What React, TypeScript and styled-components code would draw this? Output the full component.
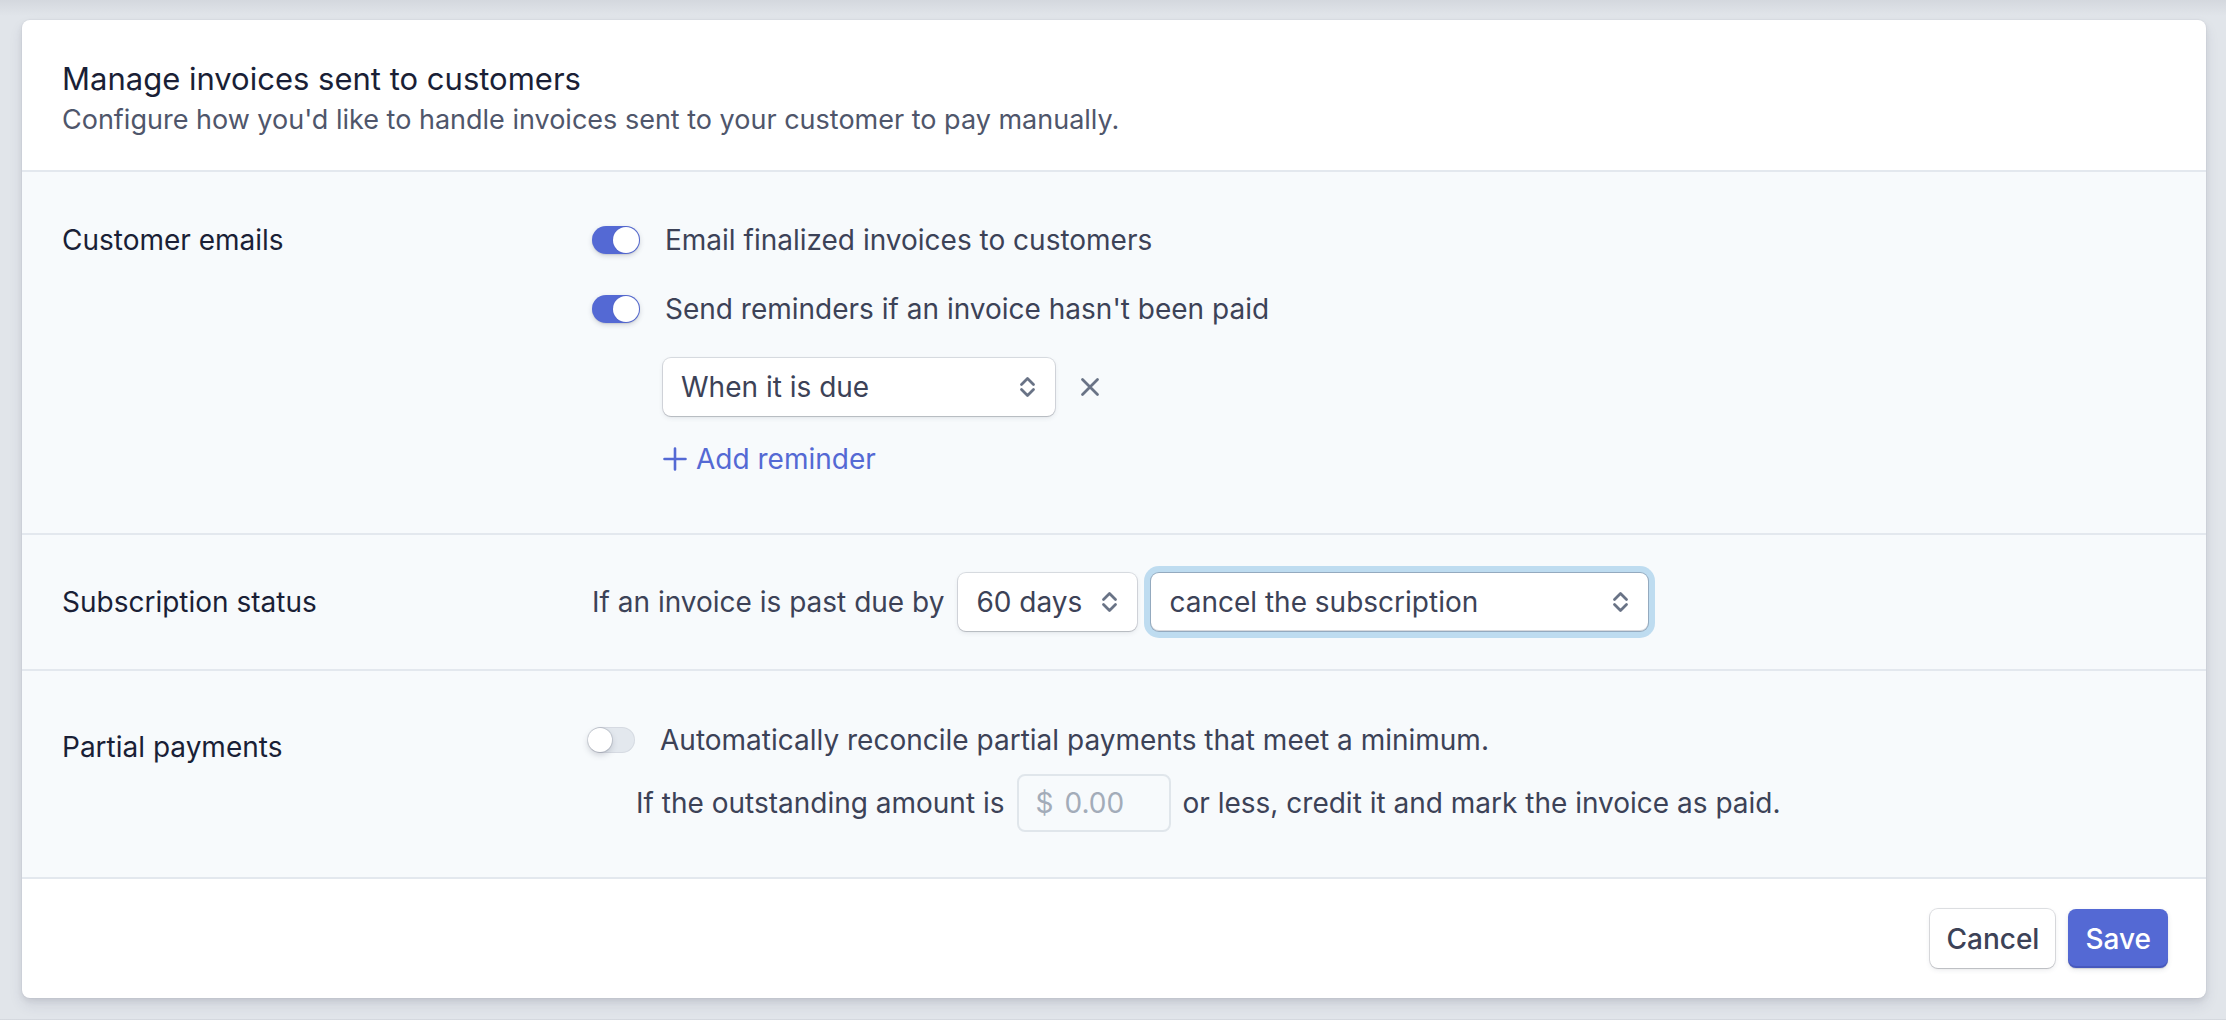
import React from 'react';
import styled, { createGlobalStyle } from 'styled-components';

const GlobalStyle = createGlobalStyle`
  html, body {
    margin: 0;
    padding: 0;
  }

  body {
    background: linear-gradient(180deg, #d4d8de 0px, #e1e5ea 16px, #e1e5ea 100%);
    font-family: Inter, "Noto Sans", "Liberation Sans", sans-serif;
    color: #3c4257;
    -webkit-font-smoothing: antialiased;
  }
`;

const Page = styled.div`
  padding: 20px 20px 21px 22px;
`;

const Card = styled.section`
  background: #fff;
  border-radius: 8px;
  overflow: hidden;
  box-shadow: 0 0 0 1px rgba(50, 50, 93, 0.03), 0 7px 14px rgba(50, 50, 93, 0.1),
    0 3px 6px rgba(0, 0, 0, 0.07);
`;

const Header = styled.header`
  padding: 38px 40px 29px;
  border-bottom: 2px solid #e3e8ee;
`;

const Title = styled.h1`
  margin: 0;
  font-size: 31px;
  line-height: 41px;
  font-weight: 400;
  color: #1a1f36;
`;

const Subtitle = styled.p`
  margin: 0;
  font-size: 27px;
  line-height: 42px;
  color: #4f566b;
`;

const Section = styled.div<{ $pt: number; $pb: number; $center?: boolean }>`
  display: grid;
  grid-template-columns: 530px 1fr;
  align-items: ${(p) => (p.$center ? 'center' : 'start')};
  padding: ${(p) => p.$pt}px 40px ${(p) => p.$pb}px;
  background: #f7fafc;
  border-bottom: 2px solid #e3e8ee;
`;

const Label = styled.div<{ $offset?: number }>`
  padding-top: ${(p) => p.$offset || 0}px;
  font-size: 28px;
  line-height: 40px;
  color: #1a1f36;
`;

const Stack = styled.div<{ $gap: number }>`
  display: flex;
  flex-direction: column;
  align-items: flex-start;
  gap: ${(p) => p.$gap}px;
`;

const SubBlock = styled(Stack)`
  padding-left: 71px;
`;

const ToggleRow = styled.div<{ $shift?: number }>`
  display: flex;
  align-items: center;
  gap: 25px;
  margin-left: ${(p) => p.$shift || 0}px;
  font-size: 28px;
  line-height: 40px;
  color: #3c4257;
`;

const Switch = styled.span<{ $on: boolean }>`
  position: relative;
  flex: none;
  width: ${(p) => (p.$on ? 48 : 47)}px;
  height: ${(p) => (p.$on ? 28 : 26)}px;
  border-radius: 14px;
  background: ${(p) => (p.$on ? '#5469d4' : '#e3e8ee')};
  box-shadow: ${(p) =>
    p.$on
      ? '0 2px 5px rgba(60, 66, 87, 0.2), 0 1px 1px rgba(0, 0, 0, 0.08)'
      : 'inset 0 0 0 1px rgba(60, 66, 87, 0.08)'};

  &::after {
    content: '';
    position: absolute;
    top: 1px;
    ${(p) => (p.$on ? 'right: 1px;' : 'left: 0;')}
    width: ${(p) => (p.$on ? 26 : 24)}px;
    height: ${(p) => (p.$on ? 26 : 24)}px;
    border-radius: 50%;
    background: #fff;
    box-shadow: ${(p) =>
      p.$on
        ? '0 0 0 1px rgba(60, 66, 87, 0.06)'
        : '0 0 0 1px rgba(60, 66, 87, 0.16), 0 3px 6px rgba(60, 66, 87, 0.22)'};
  }
`;

const InlineRow = styled.div<{ $gap: number; $indent?: number }>`
  display: flex;
  align-items: center;
  gap: ${(p) => p.$gap}px;
  margin-left: ${(p) => p.$indent || 0}px;
  font-size: 28px;
  line-height: 40px;
  color: #3c4257;
`;

const SelectBox = styled.div<{ $width: number; $focused?: boolean }>`
  display: flex;
  align-items: center;
  justify-content: space-between;
  box-sizing: border-box;
  flex: none;
  width: ${(p) => p.$width}px;
  height: 58px;
  padding: 0 19px 0 18px;
  background: #fff;
  border-radius: 8px;
  font-size: 28px;
  color: #3c4257;
  box-shadow: ${(p) =>
    p.$focused
      ? '0 0 0 1px rgba(60, 66, 87, 0.32), 0 0 0 7px rgba(58, 151, 212, 0.3), inset 0 -1px 0 rgba(60, 66, 87, 0.2)'
      : '0 0 0 1px rgba(60, 66, 87, 0.16), 0 2px 5px rgba(60, 66, 87, 0.1), 0 1px 1px rgba(0, 0, 0, 0.12)'};
`;

const IconButton = styled.span`
  display: flex;
  align-items: center;
  color: #697386;
`;

const AddLink = styled.span`
  display: flex;
  align-items: center;
  gap: 9px;
  font-size: 28px;
  line-height: 40px;
  color: #5469d4;
`;

const AmountInput = styled.div`
  display: flex;
  align-items: center;
  gap: 11px;
  box-sizing: border-box;
  width: 154px;
  height: 58px;
  padding-left: 17px;
  border: 2px solid #e0e6eb;
  border-radius: 8px;
  color: #a3acb9;
  font-size: 28px;
`;

const Footer = styled.footer`
  display: flex;
  justify-content: flex-end;
  gap: 13px;
  padding: 30px 38px 30px;
`;

const Button = styled.button<{ $primary?: boolean }>`
  height: 59px;
  padding: 0 ${(p) => (p.$primary ? 17 : 16)}px;
  border: none;
  border-radius: 8px;
  font-family: inherit;
  font-size: 28px;
  font-weight: 500;
  cursor: pointer;
  color: ${(p) => (p.$primary ? '#fff' : '#3c4257')};
  background: ${(p) => (p.$primary ? '#5469d4' : '#fff')};
  box-shadow: ${(p) =>
    p.$primary
      ? 'inset 0 -2px 0 rgba(30, 40, 120, 0.25), 0 2px 5px rgba(60, 66, 87, 0.12), 0 1px 1px rgba(0, 0, 0, 0.12)'
      : '0 0 0 1px rgba(60, 66, 87, 0.16), 0 2px 5px rgba(60, 66, 87, 0.1), 0 1px 1px rgba(0, 0, 0, 0.12)'};
`;

const Chevrons = () => (
  <svg width="17" height="24" viewBox="0 0 17 24" fill="none">
    <path
      d="M2.5 9.5L8.5 3.5L14.5 9.5M2.5 14.5L8.5 20.5L14.5 14.5"
      stroke="#697386"
      strokeWidth="2.8"
      strokeLinecap="round"
      strokeLinejoin="round"
    />
  </svg>
);

const Select: React.FC<{ value: string; width: number; focused?: boolean }> = ({
  value,
  width,
  focused,
}) => (
  <SelectBox $width={width} $focused={focused}>
    <span>{value}</span>
    <Chevrons />
  </SelectBox>
);

const CloseIcon = () => (
  <svg width="20" height="20" viewBox="0 0 20 20" fill="none">
    <path d="M2.5 2.5L17.5 17.5M17.5 2.5L2.5 17.5" stroke="currentColor" strokeWidth="2.8" strokeLinecap="round" />
  </svg>
);

const PlusIcon = () => (
  <svg width="24" height="24" viewBox="0 0 24 24" fill="none">
    <path d="M12 1.5V22.5M1.5 12H22.5" stroke="#5469d4" strokeWidth="2.6" strokeLinecap="round" />
  </svg>
);

const App: React.FC = () => {
  return (
    <Page>
      <GlobalStyle />
      <Card>
        <Header>
          <Title>Manage invoices sent to customers</Title>
          <Subtitle>Configure how you'd like to handle invoices sent to your customer to pay manually.</Subtitle>
        </Header>

        <Section $pt={48} $pb={54}>
          <Label>Customer emails</Label>
          <Stack $gap={29}>
            <ToggleRow>
              <Switch $on />
              Email finalized invoices to customers
            </ToggleRow>
            <ToggleRow>
              <Switch $on />
              Send reminders if an invoice hasn't been paid
            </ToggleRow>
            <SubBlock $gap={23}>
              <InlineRow $gap={25}>
                <Select value="When it is due" width={392} />
                <IconButton>
                  <CloseIcon />
                </IconButton>
              </InlineRow>
              <AddLink>
                <PlusIcon />
                Add reminder
              </AddLink>
            </SubBlock>
          </Stack>
        </Section>

        <Section $pt={38} $pb={38} $center>
          <Label>Subscription status</Label>
          <InlineRow $gap={14}>
            If an invoice is past due by
            <Select value="60 days" width={179} />
            <Select value="cancel the subscription" width={497} focused />
          </InlineRow>
        </Section>

        <Section $pt={49} $pb={45}>
          <Label $offset={7}>Partial payments</Label>
          <Stack $gap={14}>
            <ToggleRow $shift={-4}>
              <Switch $on={false} />
              Automatically reconcile partial payments that meet a minimum.
            </ToggleRow>
            <InlineRow $gap={12} $indent={44}>
              If the outstanding amount is
              <AmountInput>
                <span>$</span>
                <span>0.00</span>
              </AmountInput>
              or less, credit it and mark the invoice as paid.
            </InlineRow>
          </Stack>
        </Section>

        <Footer>
          <Button>Cancel</Button>
          <Button $primary>Save</Button>
        </Footer>
      </Card>
    </Page>
  );
};

export default App;
